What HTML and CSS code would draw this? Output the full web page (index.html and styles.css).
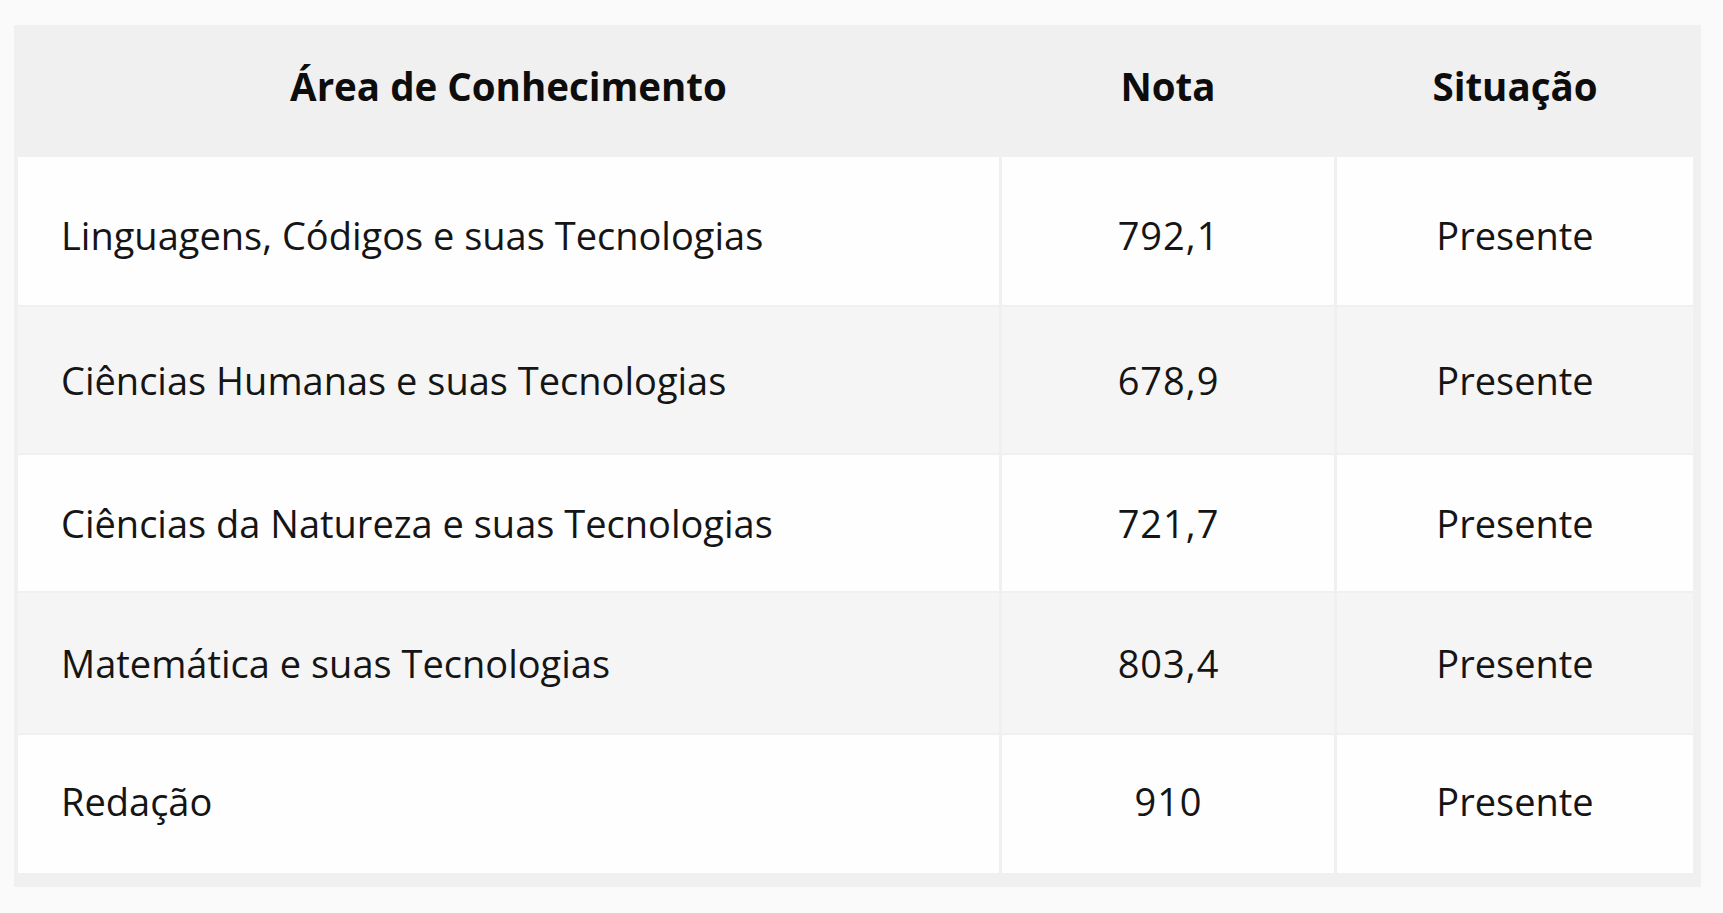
FILE: index.html
```html
<!DOCTYPE html>
<html lang="pt-BR">
<head>
<meta charset="utf-8">
<title>Notas</title>
<link rel="stylesheet" href="styles.css">
</head>
<body>
<div class="scores" role="table">
  <div class="head" role="row">
    <div class="hcell" role="columnheader">Área de Conhecimento</div>
    <div class="hcell" role="columnheader">Nota</div>
    <div class="hcell" role="columnheader">Situação</div>
  </div>
  <div class="body">
    <div class="row" role="row">
      <div class="cell area" role="cell">Linguagens, Códigos e suas Tecnologias</div>
      <div class="cell num" role="cell">792,1</div>
      <div class="cell" role="cell">Presente</div>
    </div>
    <div class="row" role="row">
      <div class="cell area" role="cell">Ciências Humanas e suas Tecnologias</div>
      <div class="cell num" role="cell">678,9</div>
      <div class="cell" role="cell">Presente</div>
    </div>
    <div class="row" role="row">
      <div class="cell area" role="cell">Ciências da Natureza e suas Tecnologias</div>
      <div class="cell num" role="cell">721,7</div>
      <div class="cell" role="cell">Presente</div>
    </div>
    <div class="row" role="row">
      <div class="cell area" role="cell">Matemática e suas Tecnologias</div>
      <div class="cell num" role="cell">803,4</div>
      <div class="cell" role="cell">Presente</div>
    </div>
    <div class="row" role="row">
      <div class="cell area" role="cell">Redação</div>
      <div class="cell num" role="cell">910</div>
      <div class="cell" role="cell">Presente</div>
    </div>
  </div>
</div>
</body>
</html>
```

FILE: styles.css
```css
html, body {
  margin: 0;
  padding: 0;
}

body {
  background: #fafafa;
  font-family: "Open Sans", "Noto Sans", "Liberation Sans", sans-serif;
  color: #151515;
}

.scores {
  box-sizing: border-box;
  width: 1687px;
  margin: 25px 0 0 14px;
  padding: 0 8px 14px 4px;
  background: #f0f0f0;
}

.head,
.body {
  display: grid;
  grid-template-columns: 981px 332px 356px;
  column-gap: 3px;
}

.head {
  height: 132px;
}

.hcell {
  display: flex;
  align-items: center;
  justify-content: center;
  padding-bottom: 10px;
  font-size: 38.5px;
  font-weight: 700;
  color: #0d0d0d;
}

.body {
  grid-template-rows: 148px 146px 136px 140px 138px;
  row-gap: 2px;
}

.row {
  display: contents;
}

.cell {
  display: flex;
  align-items: center;
  justify-content: center;
  background: #fefefe;
  font-size: 38px;
  font-weight: 400;
}

.cell.num {
  letter-spacing: 1px;
  padding-left: 1px;
}

.row:nth-child(even) .cell {
  background: #f5f5f5;
}

.cell.area {
  justify-content: flex-start;
  padding-left: 43px;
}

.row:first-child .cell {
  padding-top: 8px;
}

.row:last-child .cell {
  padding-bottom: 6px;
}
```
